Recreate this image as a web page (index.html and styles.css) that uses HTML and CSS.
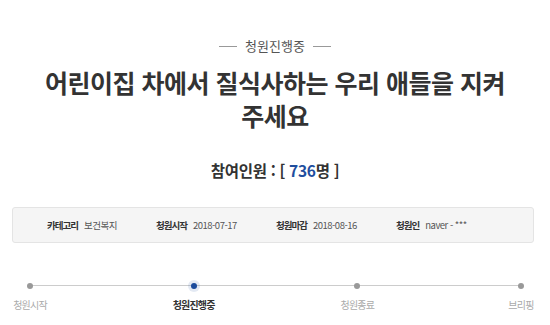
FILE: index.html
```html
<!DOCTYPE html>
<html lang="ko">
<head>
    <meta charset="UTF-8">
    <meta name="viewport" content="width=device-width, initial-scale=1.0">
    <title>청원진행중</title>
    <link rel="stylesheet" href="styles.css">
</head>
<body>

    <div class="petition">
        <div class="status"><span class="status-text">청원진행중</span></div>
        <h1 class="title">어린이집 차에서 질식사하는 우리 애들을 지켜<br>주세요</h1>
        <div class="count">참여인원 : [ <span class="num">736</span>명 ]</div>

        <ul class="info">
            <li><b>카테고리</b>보건복지</li>
            <li><b>청원시작</b>2018-07-17</li>
            <li><b>청원마감</b>2018-08-16</li>
            <li><b>청원인</b>naver - ***</li>
        </ul>

        <div class="steps">
            <div class="step"><span class="dot"></span><span class="label">청원시작</span></div>
            <div class="step active"><span class="dot"></span><span class="label">청원진행중</span></div>
            <div class="step"><span class="dot"></span><span class="label">청원종료</span></div>
            <div class="step"><span class="dot"></span><span class="label">브리핑</span></div>
        </div>
    </div>

</body>
</html>
```

FILE: styles.css
```css
body {
    margin: 0;
    background-color: #fff;
    font-family: "Noto Sans CJK KR", "Noto Sans", sans-serif;
    color: #333;
}

.petition {
    width: 550px;
    padding-top: 36px;
}

.status {
    display: flex;
    justify-content: center;
    align-items: center;
    gap: 8px;
    font-size: 13px;
    color: #555;
    line-height: 20px;
}

.status::before,
.status::after {
    content: "";
    width: 18px;
    height: 1px;
    background-color: #999;
}

.title {
    margin: 10px 0 0;
    text-align: center;
    font-size: 25px;
    font-weight: bold;
    line-height: 33px;
    letter-spacing: -0.5px;
    color: #333;
}

.count {
    margin-top: 26px;
    text-align: center;
    font-size: 15.5px;
    font-weight: bold;
    line-height: 24px;
    letter-spacing: -0.3px;
    color: #333;
}

.count .num {
    color: #1f4e9e;
}

.info {
    display: flex;
    list-style: none;
    margin: 25px 16px 0 12px;
    padding: 0 0 0 34px;
    height: 34px;
    align-items: center;
    background-color: #f5f5f5;
    border: 1px solid #e4e4e4;
    border-radius: 3px;
    font-size: 9.5px;
    letter-spacing: -0.5px;
    color: #555;
}

.info li {
    width: 120px;
    white-space: nowrap;
}

.info li:first-child {
    width: 109px;
}

.info b {
    color: #333;
    margin-right: 6px;
    letter-spacing: -1px;
}

.steps {
    position: relative;
    display: flex;
    justify-content: space-between;
    margin: 36px 11px 0 12px;
}

.steps::before {
    content: "";
    position: absolute;
    top: 6px;
    left: 18px;
    right: 18px;
    height: 1px;
    background-color: #ccc;
}

.step {
    position: relative;
    display: flex;
    flex-direction: column;
    align-items: center;
    width: 36px;
    font-size: 10px;
    letter-spacing: -0.8px;
    color: #aaa;
}

.dot {
    width: 6px;
    height: 6px;
    margin-top: 4px;
    border-radius: 50%;
    background-color: #999;
}

.label {
    margin-top: 8px;
    white-space: nowrap;
}

.step.active .dot {
    background-color: #1a4a9c;
    box-shadow: 0 0 0 3px rgba(26, 74, 156, 0.12);
}

.step.active .label {
    color: #333;
    font-weight: bold;
}
```
